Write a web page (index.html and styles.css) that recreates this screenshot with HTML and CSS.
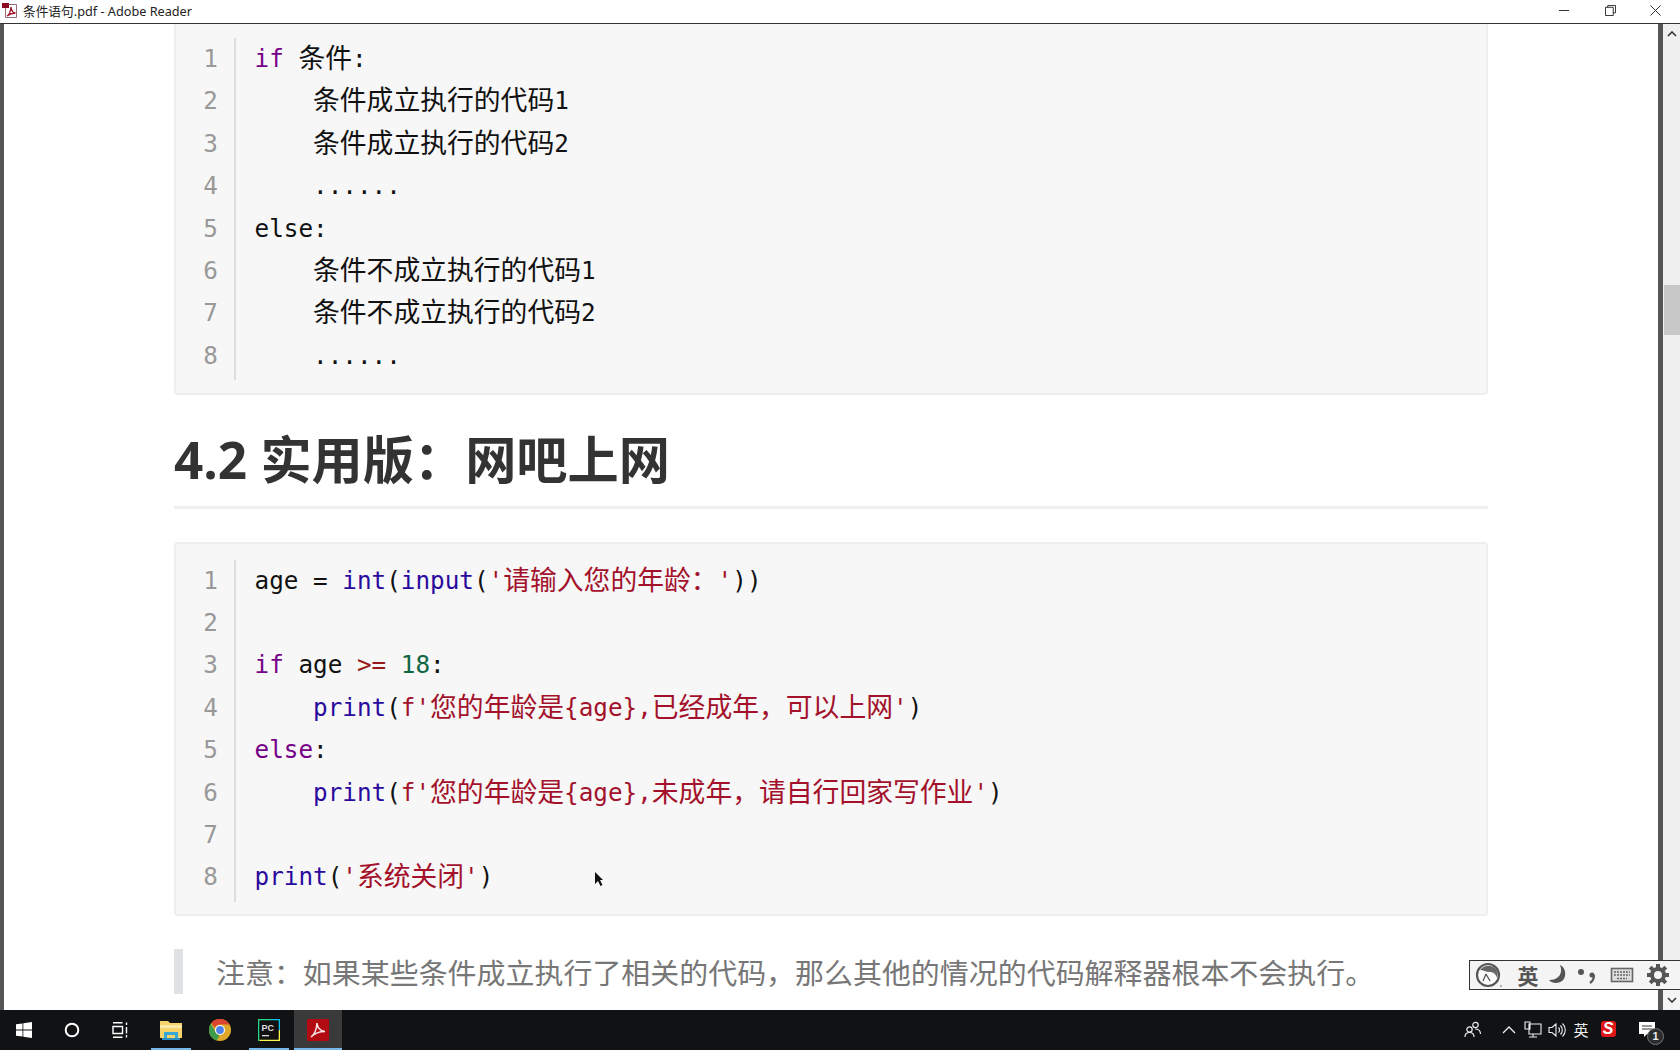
FILE: index.html
```html
<!DOCTYPE html>
<html lang="zh-CN">
<head>
<meta charset="utf-8">
<title>条件语句.pdf - Adobe Reader</title>
<link rel="stylesheet" href="styles.css">
</head>
<body>
<header class="titlebar">
  <svg class="pdf-icon" viewBox="0 0 16 16"><path d="M3.500 1.500h11v13h-11z" fill="#fff" stroke="#9a6a72"/><rect x="0" y="0" width="7" height="5" fill="#8c0a20"/><path d="M5 13c2-1 3.500-4 4-9 .5 4 2 6 4.500 6-3 0-6 1-8.500 3z" fill="none" stroke="#a01028" stroke-width="1.300"/></svg>
  <span class="title-text">条件语句.pdf - Adobe Reader</span>
  <div class="win-controls">
    <svg class="win-btn" viewBox="0 0 12 12"><path d="M0 6h11" stroke="#222" stroke-width="1"/></svg>
    <svg class="win-btn" viewBox="0 0 12 12"><path d="M3 2.500V.5h8.500v8H9M.5 2.500h8.500v9H.5z" fill="none" stroke="#222"/></svg>
    <svg class="win-btn" viewBox="0 0 12 12"><path d="M.5.500l11 11M11.500.500l-11 11" stroke="#222" stroke-width="1"/></svg>
  </div>
</header>

<main class="viewer">
  <div class="edge"></div>
  <div class="page">
    <article class="doc">
      <section class="code code-cut">
        <div class="gutter">
          <div>1</div><div>2</div><div>3</div><div>4</div><div>5</div><div>6</div><div>7</div><div>8</div>
        </div>
        <div class="lines">
          <div class="line"><span class="kw">if</span> <span class="zh">条件</span>:</div>
          <div class="line">    <span class="zh">条件成立执行的代码</span>1</div>
          <div class="line">    <span class="zh">条件成立执行的代码</span>2</div>
          <div class="line">    ......</div>
          <div class="line">else:</div>
          <div class="line">    <span class="zh">条件不成立执行的代码</span>1</div>
          <div class="line">    <span class="zh">条件不成立执行的代码</span>2</div>
          <div class="line">    ......</div>
        </div>
      </section>

      <h2 class="heading">4.2 实用版：网吧上网</h2>

      <section class="code">
        <div class="gutter">
          <div>1</div><div>2</div><div>3</div><div>4</div><div>5</div><div>6</div><div>7</div><div>8</div>
        </div>
        <div class="lines">
          <div class="line">age = <span class="fn">int</span>(<span class="fn">input</span>(<span class="str">'<span class="zh">请输入您的年龄：</span>'</span>))</div>
          <div class="line"></div>
          <div class="line"><span class="kw">if</span> age <span class="op">&gt;=</span> <span class="num">18</span>:</div>
          <div class="line">    <span class="fn">print</span>(<span class="str">f'<span class="zh">您的年龄是</span>{age},<span class="zh">已经成年，可以上网</span>'</span>)</div>
          <div class="line"><span class="kw">else</span>:</div>
          <div class="line">    <span class="fn">print</span>(<span class="str">f'<span class="zh">您的年龄是</span>{age},<span class="zh">未成年，请自行回家写作业</span>'</span>)</div>
          <div class="line"></div>
          <div class="line"><span class="fn">print</span>(<span class="str">'<span class="zh">系统关闭</span>'</span>)</div>
        </div>
      </section>

      <blockquote class="note">注意：如果某些条件成立执行了相关的代码，那么其他的情况的代码解释器根本不会执行。</blockquote>
    </article>
  </div>
  <div class="edge edge-right"></div>
  <aside class="scrollbar">
    <svg class="sb-arrow" viewBox="0 0 10 6"><path d="M1 5l4-4 4 4" fill="none" stroke="#333" stroke-width="1.600"/></svg>
    <div class="sb-track"><div class="sb-thumb"></div></div>
    <div class="sb-down"><svg class="sb-arrow" viewBox="0 0 10 6"><path d="M1 1l4 4 4-4" fill="none" stroke="#333" stroke-width="1.600"/></svg></div>
  </aside>
</main>

<footer class="taskbar">
  <div class="task-btn">
    <svg class="ico16" viewBox="0 0 16 16"><path d="M0 2.300l6.500-.9v6.200H0zM7.300 1.300L16 0v7.600H7.300zM0 8.400h6.500v6.200L0 13.700zM7.300 8.400H16V16l-8.700-1.200z" fill="#fff"/></svg>
  </div>
  <div class="task-btn">
    <svg class="ico16" viewBox="0 0 16 16"><circle cx="8" cy="8" r="6.300" fill="none" stroke="#fff" stroke-width="2"/></svg>
  </div>
  <div class="task-btn">
    <svg class="ico16" viewBox="0 0 16 16"><path d="M1 .700h9.500M1 15.300h9.500M1 4.500h9.500v7H1zM14.500 .500v2.500M14.500 5v6.500M14.500 13v2.500" fill="none" stroke="#fff" stroke-width="1.400"/></svg>
  </div>
  <div class="apps">
    <div class="task-btn running">
      <svg class="ico22" viewBox="0 0 22 22"><path d="M0 2h8l2 2h12v15H0z" fill="#f6d46b"/><path d="M0 6h22v3H0z" fill="#fbe9a8"/><path d="M4 13h14v6h-3v-3H7v3H4z" fill="#35a8d8"/><rect x="2" y="19" width="18" height="2" fill="#2a8fc0"/></svg>
    </div>
    <div class="task-btn">
      <svg class="ico22" viewBox="0 0 22 22"><circle cx="11" cy="11" r="11" fill="#e0a82a"/><path d="M11 0a11 11 0 0 1 9.500 5.500H11a5.500 5.500 0 0 0-5 3.200L2.200 3.900A11 11 0 0 1 11 0z" fill="#d9432f"/><path d="M1.800 4.500L6.500 13a5.500 5.500 0 0 0 4 3.400L7.700 21.500A11 11 0 0 1 1.800 4.500z" fill="#3f9c4a"/><circle cx="11" cy="11" r="5" fill="#fff"/><circle cx="11" cy="11" r="3.900" fill="#4a80e8"/></svg>
    </div>
    <div class="task-btn running">
      <svg class="ico22" viewBox="0 0 22 22"><path d="M0 0h13v1.500H1.500V22H0z" fill="#21d789"/><path d="M13 0h9v11h-1.500V1.500H13z" fill="#07c3f2"/><path d="M1.500 20.500H20.500V11H22v11H1.500z" fill="#fcf84a"/><rect x="1.500" y="1.500" width="19" height="19" fill="#111"/><text class="pc-text" x="3.500" y="12">PC</text><rect x="4" y="16" width="7" height="1.300" fill="#ddd"/></svg>
    </div>
    <div class="task-btn active">
      <svg class="ico22" viewBox="0 0 22 22"><rect width="22" height="22" rx="1" fill="#b30b12"/><path d="M4 18c3-2 5.500-7 6-14 .5 6 3.500 8 8 8.500-4.500 0-9.500 1-14 5.500z" fill="none" stroke="#f4e4e4" stroke-width="1.500"/></svg>
    </div>
  </div>
  <div class="tray">
    <svg class="tray-item" viewBox="0 0 18 18"><circle cx="11.500" cy="4" r="2.700" fill="none" stroke="#eee" stroke-width="1.200"/><circle cx="5.500" cy="8.500" r="2.700" fill="none" stroke="#eee" stroke-width="1.200"/><path d="M1 16c0-3 2-4.500 4.500-4.500S10 13 10 16M11 8c3 0 5.500 1.500 5.500 5" fill="none" stroke="#eee" stroke-width="1.200"/></svg>
    <svg class="tray-item tray-caret" viewBox="0 0 18 18"><path d="M3 12l6-6 6 6" fill="none" stroke="#eee" stroke-width="1.300"/></svg>
    <svg class="tray-item" viewBox="0 0 18 18"><path d="M5 3h12v10H5zM1 1h5v7H1zM9 13v3M5 16h8" fill="#101214" stroke="#eee" stroke-width="1.100"/></svg>
    <svg class="tray-item" viewBox="0 0 18 18"><path d="M1 6.500h3L8 3v12L4 11.500H1zM10.500 6.500a3.500 3.500 0 0 1 0 5M12.500 4.500a6.500 6.500 0 0 1 0 9M14.500 2.500a9 9 0 0 1 0 13" fill="none" stroke="#eee" stroke-width="1.100"/></svg>
    <span class="tray-item tray-lang">英</span>
    <div class="tray-item tray-sogou"><span class="sogou-s">S</span></div>
    <div class="tray-item tray-notify">
      <svg class="notify-ico" viewBox="0 0 18 18"><path d="M1 1h16v12H9l-3 3v-3H1z" fill="#fff"/><path d="M4 5h10M4 8h10" stroke="#333" stroke-width="1"/></svg>
      <span class="notify-badge">1</span>
    </div>
  </div>
</footer>

<div class="ime">
  <svg class="ime-item" viewBox="0 0 28 28"><circle cx="14" cy="14" r="11" fill="#fafafa" stroke="#555" stroke-width="2.200"/><path d="M6 9c4-5 11-6 16-1 2 3 2 6 1 9-1-4-4-6-7-6-4 0-7-2-10-2z" fill="#666"/><path d="M12 13l-3 7M12 13l4 7" fill="none" stroke="#555" stroke-width="1.300"/><path d="M26 25h3" stroke="#999" stroke-width="1.500"/></svg>
  <span class="ime-item ime-lang">英</span>
  <svg class="ime-item ime-moon" viewBox="0 0 28 28"><path d="M17 4c3 7 0 15-11 15 3 4 14 5 16-4 1-5-1-9-5-11z" fill="#555"/></svg>
  <svg class="ime-item ime-punc" viewBox="0 0 28 28"><circle cx="8" cy="11" r="3" fill="#555"/><circle cx="19" cy="14" r="2.500" fill="#555"/><path d="M21 14c0 4-1 6-4 8" fill="none" stroke="#555" stroke-width="2.200"/></svg>
  <svg class="ime-item ime-keys" viewBox="0 0 28 28"><rect x="3.500" y="7.500" width="21" height="13" fill="#ddd" stroke="#666" stroke-width="1.600"/><path d="M6 11h16M6 14h16M9 17.500h10" stroke="#666" stroke-width="1.400" stroke-dasharray="2 1"/></svg>
  <svg class="ime-item ime-gear" viewBox="0 0 28 28"><circle cx="14" cy="14" r="6" fill="none" stroke="#555" stroke-width="4"/><path d="M14 3v5M14 20v5M3 14h5M20 14h5M6.200 6.200l3.500 3.500M18.300 18.300l3.500 3.500M21.800 6.200l-3.500 3.500M9.700 18.300l-3.500 3.500" stroke="#555" stroke-width="4"/></svg>
</div>

<svg class="cursor" viewBox="0 0 9 15"><path d="M0 0l8 8H5l2.500 5-2 1L3 9l-3 3z" fill="#111"/></svg>
</body>
</html>
```
FILE: styles.css
```css
* { box-sizing: border-box; }
html, body { margin: 0; height: 100%; }
body {
  position: relative;
  width: 1680px;
  height: 1050px;
  display: flex;
  flex-direction: column;
  overflow: hidden;
  background: #fff;
  font-family: "Noto Sans", "Noto Sans CJK SC", sans-serif;
}

/* window title */
.titlebar {
  height: 24px;
  flex: none;
  display: flex;
  align-items: center;
  background: #fff;
  border-bottom: 1px solid #333;
  padding: 0 0 2px 2px;
}
.pdf-icon { width: 16px; height: 16px; flex: none; }
.title-text {
  margin-left: 5px;
  font-size: 12.700px;
  color: #222;
  white-space: nowrap;
  font-family: "Noto Sans", "Noto Sans CJK SC", sans-serif;
}
.win-controls {
  margin-left: auto;
  display: flex;
  gap: 34.500px;
  padding-right: 19px;
}
.win-btn { width: 11px; height: 11px; display: block; }

/* viewer */
.viewer { flex: 1; min-height: 0; display: flex; }
.edge { width: 4px; flex: none; background: #555; }
.edge-right { width: 5px; }
.page { flex: 1; min-width: 0; background: #fff; overflow: hidden; }
.doc { width: 1314px; margin: 0 0 0 170px; }

.code {
  display: flex;
  background: #f7f7f7;
  border: 2px solid #eeeeee;
  border-radius: 4px;
  padding: 15.500px 0 12.500px;
  color: #111;
  font-family: "DejaVu Sans Mono", "Noto Sans CJK SC", monospace;
  font-size: 24.300px;
  margin-top: 33px;
}
.code-cut {
  margin-top: 0;
  border-top: 0;
  border-radius: 0 0 4px 4px;
  padding-top: 14px;
  padding-bottom: 13px;
}
.gutter {
  width: 60px;
  flex: none;
  border-right: 2px solid #dddddd;
  padding: 0 16px 3px 0;
  text-align: right;
  color: #999;
}
.gutter div { height: 42.400px; line-height: 42.400px; }
.lines { padding-left: 18.500px; flex: 1; min-width: 0; }
.line { height: 42.400px; line-height: 42.400px; white-space: pre; }
.zh {
  font-family: "Noto Sans CJK SC", sans-serif;
  font-size: 26.800px;
  line-height: 1;
  vertical-align: -1px;
}
.kw { color: #770088; }
.fn { color: #2a0a9e; }
.str { color: #a3112b; }
.num { color: #116644; }
.op { color: #981a1a; }

.heading {
  margin: 36px 0 0;
  padding-bottom: 18px;
  height: 78px;
  line-height: 57px;
  border-bottom: 3px solid #eeeeee;
  font-family: "Open Sans", "Noto Sans CJK SC", sans-serif;
  font-size: 51.200px;
  font-weight: 700;
  color: #333;
  white-space: nowrap;
}

.note {
  margin: 33px 0 0;
  height: 45px;
  line-height: 45px;
  padding-left: 33px;
  border-left: 9.500px solid #dfe2e5;
  color: #777;
  font-family: "Noto Sans CJK SC", sans-serif;
  font-size: 28.960px;
  white-space: nowrap;
}

/* scrollbar */
.scrollbar {
  width: 17px;
  flex: none;
  display: flex;
  flex-direction: column;
  background: #f0f0f0;
}
.sb-arrow { width: 10px; height: 6px; display: block; margin: 7px auto 0; flex: none; }
.sb-track { flex: 1; padding-top: 248px; }
.sb-thumb { height: 50px; margin-left: 1px; background: #c8c8c8; }
.sb-down { height: 20px; flex: none; background: #f4f4f4; }

/* taskbar */
.taskbar {
  height: 40px;
  flex: none;
  display: flex;
  background: #101214;
}
.task-btn {
  width: 48px;
  height: 40px;
  flex: none;
  display: flex;
  align-items: center;
  justify-content: center;
}
.apps { display: flex; gap: 1px; margin-left: 3px; }
.running {
  background: linear-gradient(#76b9ed, #76b9ed) center bottom / 40px 2px no-repeat;
}
.active {
  background: linear-gradient(#76b9ed, #76b9ed) center bottom / 48px 2px no-repeat, #3a3a3a;
}
.ico16 { width: 16px; height: 16px; }
.ico22 { width: 22px; height: 22px; }
.pc-text { font: 700 9px "Liberation Sans", sans-serif; fill: #ddd; }

.tray {
  margin-left: auto;
  padding-right: 21px;
  display: flex;
  align-items: center;
}
.tray-item { width: 24px; height: 18px; flex: none; display: block; }
.tray-caret { margin-left: 12px; }
.tray-lang {
  color: #eee;
  font: 15px/18px "Noto Sans CJK SC", sans-serif;
  text-align: center;
}
.tray-sogou { margin-left: 3px; display: flex; justify-content: center; }
.sogou-s {
  width: 15px;
  height: 16px;
  background: #e0161b;
  color: #fff;
  font: italic 700 16px/16px "Liberation Sans", sans-serif;
  text-align: center;
  border-radius: 3px;
}
.tray-notify { margin-left: 15px; position: relative; }
.notify-ico { width: 18px; height: 18px; display: block; margin-left: 3px; }
.notify-badge {
  position: absolute;
  left: 12px;
  top: 7px;
  width: 17px;
  height: 17px;
  border-radius: 50%;
  background: #2a2c2e;
  border: 1px solid #777;
  color: #eee;
  font: 700 11px/15px "Liberation Sans", sans-serif;
  text-align: center;
}

/* floating input-method bar */
.ime {
  position: absolute;
  left: 1469px;
  top: 960px;
  width: 211px;
  height: 30px;
  display: flex;
  align-items: center;
  padding-left: 4px;
  background: #f4f4f4;
  border: 1px solid #333;
  border-right: 0;
}
.ime-item { width: 28px; height: 28px; flex: none; display: block; }
.ime-lang {
  margin-left: 12px;
  color: #555;
  font: 700 21px/28px "Noto Sans CJK SC", sans-serif;
  text-align: center;
}
.ime-moon { margin-left: 1px; }
.ime-punc { margin-left: 2px; }
.ime-keys { margin-left: 7px; }
.ime-gear { margin-left: 8px; }

.cursor { position: absolute; left: 595px; top: 872px; width: 9px; height: 15px; }
```
